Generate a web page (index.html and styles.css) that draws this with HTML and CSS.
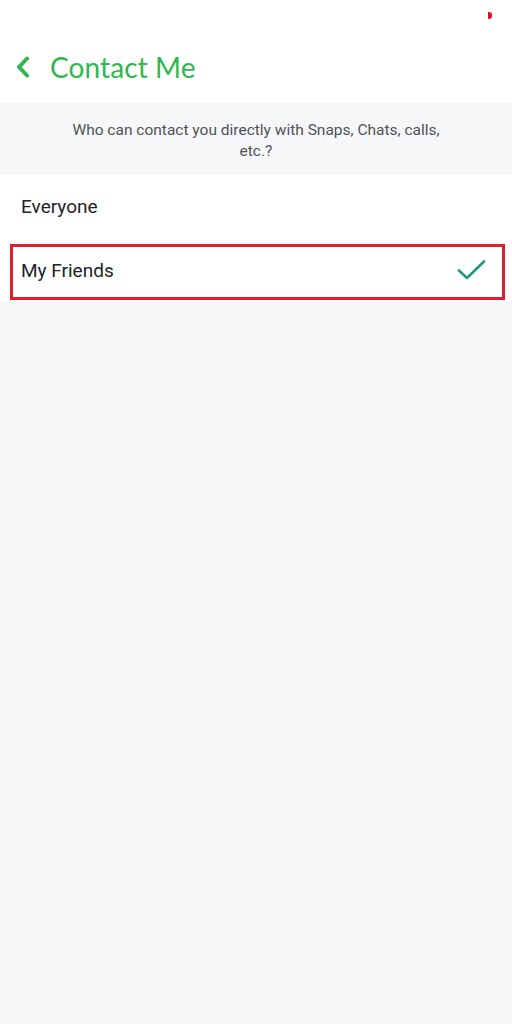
FILE: index.html
```html
<!DOCTYPE html>
<html>
<head>
<meta charset="utf-8">
<link rel="stylesheet" href="styles.css">
</head>
<body>
<div class="status"><span class="dot"></span></div>
<header class="header">
  <svg class="back" width="14" height="22" viewBox="0 0 14 22"><path d="M11 2.5 L3 11 L11 19.5" fill="none" stroke="#2eb84d" stroke-width="4" stroke-linecap="round" stroke-linejoin="round"/></svg>
  <h1 class="title">Contact Me</h1>
</header>
<div class="desc">Who can contact you directly with Snaps, Chats, calls,<br>etc.?</div>
<ul class="options">
  <li class="option">Everyone</li>
  <li class="option selected"><span>My Friends</span>
    <svg class="check" width="30" height="22" viewBox="0 0 30 22"><path d="M2 11.5 L10 19 L27 2.5" fill="none" stroke="#1f9c79" stroke-width="2.6" stroke-linecap="round" stroke-linejoin="round"/></svg>
  </li>
</ul>
</body>
</html>
```
FILE: styles.css
```css
html, body { margin: 0; padding: 0; }
body {
  background: #f6f7f9;
  min-height: 1024px;
  font-family: Roboto, "Liberation Sans", sans-serif;
}
.status {
  background: #fff;
  height: 32px;
  position: relative;
}
.dot {
  position: absolute;
  left: 488px;
  top: 12px;
  width: 4px;
  height: 7px;
  background: #e0141e;
  border-radius: 0 3px 3px 0;
}
.header {
  background: #fff;
  height: 71px;
  display: flex;
  align-items: center;
  padding-left: 16px;
  box-sizing: border-box;
  padding-bottom: 2px;
}
.back { display: block; margin-right: 20px; }
.title {
  margin: 0;
  font-family: Lato, "Open Sans", sans-serif;
  font-weight: 400;
  font-size: 28px;
  color: #2eb84d;
  letter-spacing: 0.1px;
}
.desc {
  height: 72px;
  box-sizing: border-box;
  padding-top: 17px;
  text-align: center;
  font-size: 15.5px;
  line-height: 21px;
  color: #505257;
}
.options {
  list-style: none;
  margin: 0;
  padding: 0 0 2px;
  background: #fff;
}
.option {
  height: 69px;
  display: flex;
  align-items: center;
  padding-left: 21px;
  padding-bottom: 7px;
  box-sizing: border-box;
  font-size: 19px;
  color: #222326;
}
.option.selected {
  height: 56px;
  margin: 0 7px 0 10px;
  border: 3.5px solid #e31d2b;
  padding-left: 8px;
  padding-right: 15px;
  padding-bottom: 4px;
  justify-content: space-between;
}
.check { display: block; }
```
